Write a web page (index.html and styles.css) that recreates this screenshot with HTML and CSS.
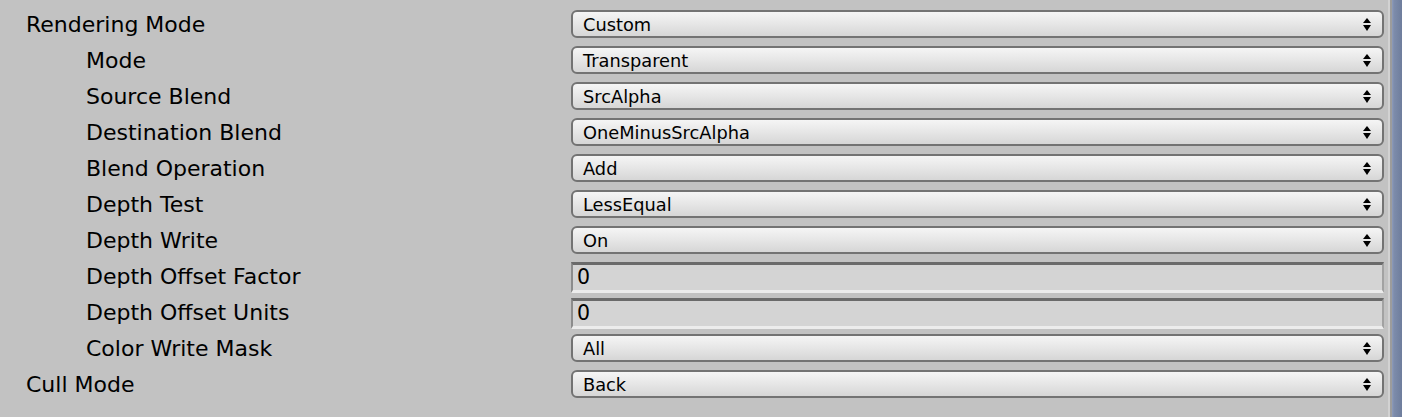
FILE: index.html
```html
<!DOCTYPE html>
<html>
<head>
<meta charset="utf-8">
<link rel="stylesheet" href="styles.css">
</head>
<body>
<div class="window">
  <div class="inspector">
    <div class="row"><div class="label">Rendering Mode</div><div class="popup"><span>Custom</span><i class="arrows"></i></div></div>
    <div class="row"><div class="label sub">Mode</div><div class="popup"><span>Transparent</span><i class="arrows"></i></div></div>
    <div class="row"><div class="label sub">Source Blend</div><div class="popup"><span>SrcAlpha</span><i class="arrows"></i></div></div>
    <div class="row"><div class="label sub">Destination Blend</div><div class="popup"><span>OneMinusSrcAlpha</span><i class="arrows"></i></div></div>
    <div class="row"><div class="label sub">Blend Operation</div><div class="popup"><span>Add</span><i class="arrows"></i></div></div>
    <div class="row"><div class="label sub">Depth Test</div><div class="popup"><span>LessEqual</span><i class="arrows"></i></div></div>
    <div class="row"><div class="label sub">Depth Write</div><div class="popup"><span>On</span><i class="arrows"></i></div></div>
    <div class="row"><div class="label sub">Depth Offset Factor</div><div class="field">0</div></div>
    <div class="row"><div class="label sub">Depth Offset Units</div><div class="field">0</div></div>
    <div class="row"><div class="label sub">Color Write Mask</div><div class="popup"><span>All</span><i class="arrows"></i></div></div>
    <div class="row"><div class="label">Cull Mode</div><div class="popup"><span>Back</span><i class="arrows"></i></div></div>
  </div>
  <div class="edge"></div>
</div>
</body>
</html>
```

FILE: styles.css
```css
html, body {
  margin: 0;
  padding: 0;
  background: #c2c2c2;
}
.window {
  display: flex;
  width: 1402px;
  height: 417px;
  overflow: hidden;
  font-family: "DejaVu Sans", Verdana, sans-serif;
  color: #000;
}
.inspector {
  width: 1384px;
  padding-top: 10px;
  display: flex;
  flex-direction: column;
  gap: 8px;
  box-sizing: border-box;
}
.row {
  display: flex;
  align-items: center;
  height: 28px;
}
.label {
  width: 571px;
  padding-left: 26px;
  padding-top: 2px;
  box-sizing: border-box;
  font-size: 22px;
  line-height: 28px;
  white-space: nowrap;
}
.label.sub {
  padding-left: 86px;
}
.popup {
  flex: 1;
  height: 28px;
  box-sizing: border-box;
  border: 2px solid #737373;
  border-radius: 6px;
  background: linear-gradient(#f5f5f5, #e6e6e6 50%, #d6d6d6);
  display: flex;
  align-items: center;
  padding-left: 10px;
  padding-right: 11px;
  padding-top: 1px;
  font-size: 17.8px;
}
.popup span {
  flex: 1;
}
.arrows {
  width: 8px;
  height: 13px;
  margin-top: -1px;
  display: flex;
  flex-direction: column;
  justify-content: space-between;
}
.arrows::before, .arrows::after {
  content: "";
  display: block;
  width: 0;
  height: 0;
  border-left: 4px solid transparent;
  border-right: 4px solid transparent;
}
.arrows::before {
  border-bottom: 5px solid #000;
}
.arrows::after {
  border-top: 6px solid #000;
}
.field {
  flex: 1;
  height: 31px;
  box-sizing: border-box;
  background: #d4d4d4;
  border-top: 3px solid #6a6a6a;
  border-left: 2px solid #8c8c8c;
  border-right: 2px solid #a2a2a2;
  border-bottom: 3px solid #ececec;
  font-size: 20.5px;
  padding-left: 4px;
  padding-bottom: 2px;
  display: flex;
  align-items: center;
  margin-top: 3px;
}
.edge {
  width: 18px;
  flex: none;
  background: linear-gradient(to right, #c2c2c2 0, #c2c2c2 4px, #d2d2d2 4px, #d2d2d2 6px, #9c9c9c 6px, #9c9c9c 8px, #8e9cbb 8px, #7d8cab 10px, #6e7d9c 18px);
}
```
